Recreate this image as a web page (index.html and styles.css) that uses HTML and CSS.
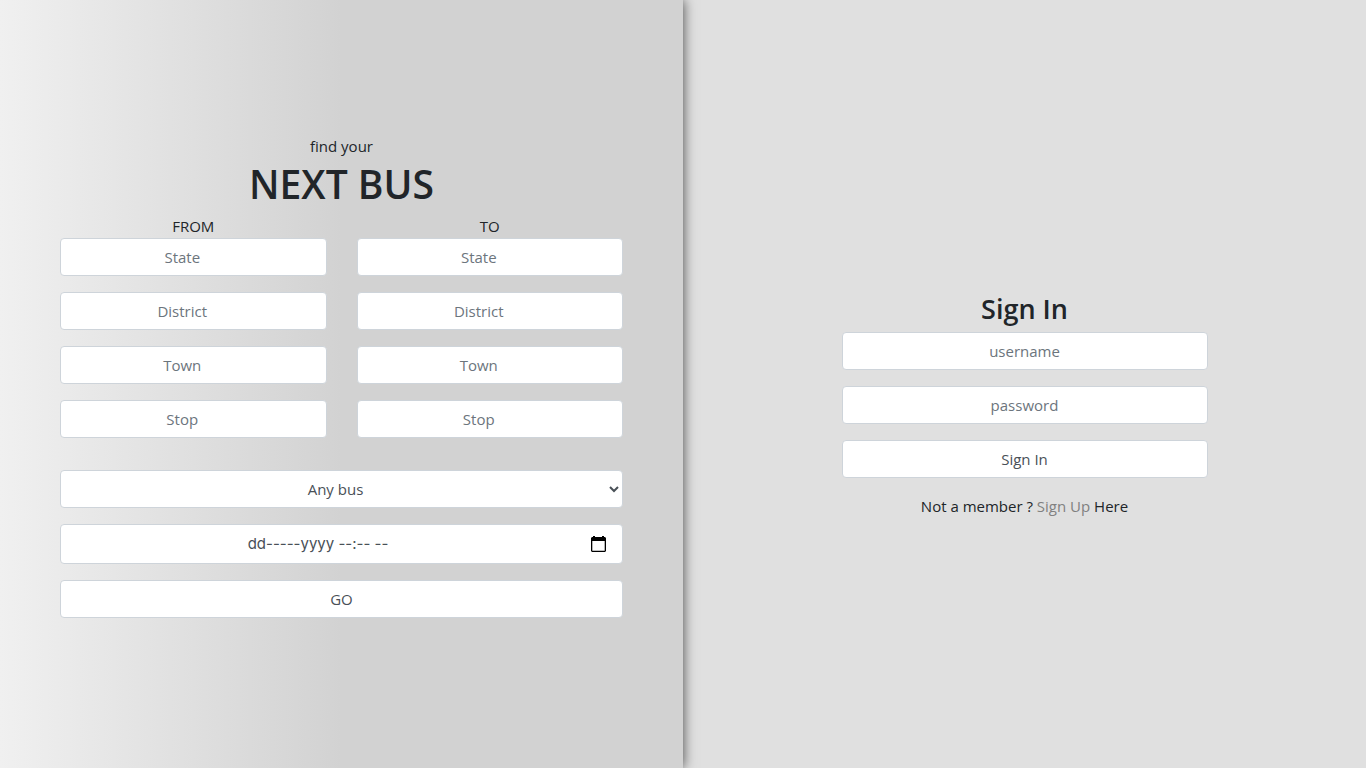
FILE: index.html
```html
<!DOCTYPE html>
<html lang="en">
<head>
<meta charset="utf-8">
<title>Next Bus</title>
<meta name="viewport" content="width=device-width, initial-scale=1">
<link rel="stylesheet" href="styles.css">
</head>
<body>
<main class="page">
  <section class="panel search">
    <form class="search-form">
      <p class="lead">find your</p>
      <h1 class="title">NEXT BUS</h1>
      <div class="route">
        <fieldset class="stops">
          <legend class="stops-label">FROM</legend>
          <input class="control place" type="text" placeholder="State" aria-label="From state">
          <input class="control place" type="text" placeholder="District" aria-label="From district">
          <input class="control place" type="text" placeholder="Town" aria-label="From town">
          <input class="control place" type="text" placeholder="Stop" aria-label="From stop">
        </fieldset>
        <fieldset class="stops">
          <legend class="stops-label">TO</legend>
          <input class="control place" type="text" placeholder="State" aria-label="To state">
          <input class="control place" type="text" placeholder="District" aria-label="To district">
          <input class="control place" type="text" placeholder="Town" aria-label="To town">
          <input class="control place" type="text" placeholder="Stop" aria-label="To stop">
        </fieldset>
      </div>
      <div class="options">
        <select class="control" aria-label="Bus type"><option>Any bus</option></select>
        <div class="control date">
          <input class="date-input" type="text" placeholder="dd-----yyyy --:-- --" aria-label="Date and time">
          <button class="date-button" type="button" aria-label="Open calendar">
            <svg width="15" height="17" viewBox="0 0 15 17" aria-hidden="true"><path fill="#000" fill-rule="evenodd" d="M2 0h2v1h7V0h2v1h1l1 1v13l-1 1H1l-1-1V2l1-1h1zM1.300 5v9.700h12.400V5z"/></svg>
          </button>
        </div>
        <button class="control" type="button">GO</button>
      </div>
    </form>
  </section>
  <section class="panel account">
    <form class="signin-form">
      <h2 class="subtitle">Sign In</h2>
      <div class="fields">
        <input class="control" type="text" placeholder="username" aria-label="Username">
        <input class="control" type="password" placeholder="password" aria-label="Password">
        <button class="control" type="button">Sign In</button>
      </div>
      <p class="signup">Not a member ? <a class="signup-link" href="#">Sign Up</a> Here</p>
    </form>
  </section>
</main>
</body>
</html>
```
FILE: styles.css
```css
* {
  box-sizing: border-box;
}

body {
  margin: 0;
  font: 15px/24px "Segoe UI", "Open Sans", "Noto Sans", sans-serif;
  color: #212529;
  text-align: center;
}

.page {
  display: grid;
  grid-template-columns: 1fr 1fr;
  min-height: 100vh;
}

.panel {
  display: flex;
  align-items: center;
  justify-content: center;
}

.search {
  position: relative;
  padding: 0 60px;
  background: linear-gradient(to right, #f0f0f0, #d2d2d2 50%);
  box-shadow: 0 0 12px rgba(0, 0, 0, 0.7);
}

.account {
  background: #e0e0e0;
}

.search-form {
  flex: 1;
  padding-bottom: 16px;
}

.lead,
.signup {
  margin: 0;
}

.title {
  margin: 0 0 4px;
  font-size: 39px;
  line-height: 52px;
  font-weight: 600;
}

.route {
  display: grid;
  grid-template-columns: 1fr 1fr;
  gap: 30px;
}

.stops {
  min-width: 0;
  margin: 0;
  padding: 0;
  border: 0;
  display: grid;
  gap: 16px;
}

.stops-label {
  width: 100%;
  padding: 0;
}

.options {
  display: grid;
  gap: 16px;
  margin-top: 32px;
}

.control {
  display: block;
  width: 100%;
  height: 38px;
  margin: 0;
  padding: 6px 12px;
  border: 1px solid #ced4da;
  border-radius: 4px;
  background: #ffffff;
  color: #495057;
  font: inherit;
  text-align: center;
}

.control::placeholder {
  color: #6c757d;
  opacity: 1;
}

.place {
  padding-right: 34px;
}

.date {
  display: flex;
  align-items: center;
  height: 40px;
  padding: 0 16px;
}

.date-input {
  flex: 1;
  min-width: 0;
  padding: 0 32px 0 0;
  border: 0;
  background: none;
  font: 15px/24px "Segoe UI", Inter, sans-serif;
  text-align: center;
}

.date-input::placeholder {
  color: #495057;
  opacity: 1;
}

.date-button {
  display: flex;
  padding: 0;
  border: 0;
  background: none;
}

.signin-form {
  width: 366px;
  padding-top: 40px;
}

.subtitle {
  margin: 0 0 4px;
  font-size: 27px;
  line-height: 38px;
  font-weight: 600;
}

.fields {
  display: grid;
  gap: 16px;
  margin-bottom: 16px;
}

.signup-link {
  color: #808080;
  text-decoration: none;
}
```
